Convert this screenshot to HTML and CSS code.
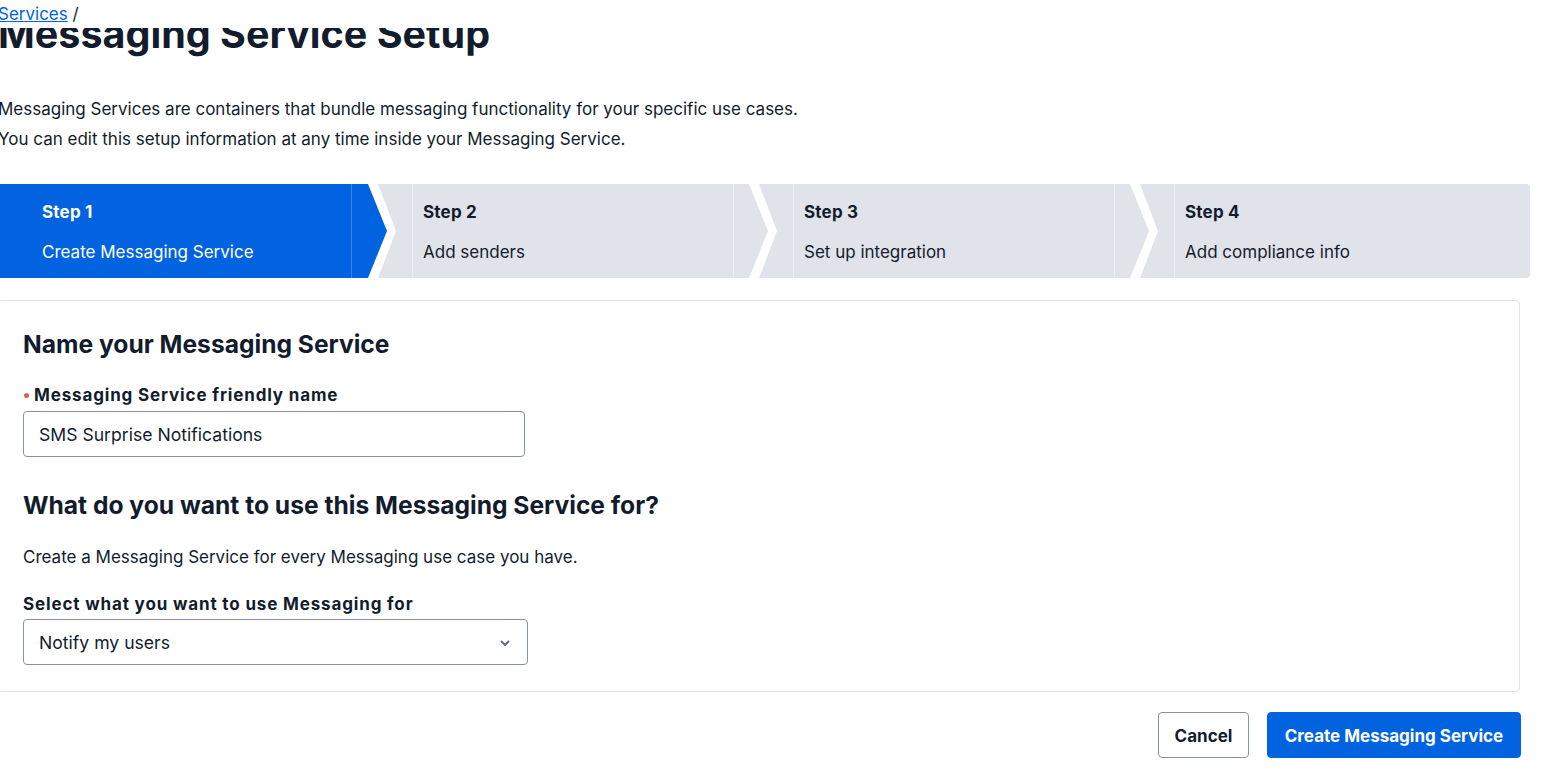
FILE: index.html
```html
<!DOCTYPE html>
<html lang="en">
<head>
<meta charset="utf-8">
<title>Messaging Service Setup</title>
<link rel="stylesheet" href="styles.css">
</head>
<body>
<div class="page">
  <nav class="crumbs"><a class="crumb-link" href="#">Services</a> /</nav>
  <div class="title-wrap"><h1 class="title">Messaging Service Setup</h1></div>
  <p class="intro">Messaging Services are containers that bundle messaging functionality for your specific use cases.<br>You can edit this setup information at any time inside your Messaging Service.</p>

  <ol class="steps">
    <li class="step step-first step-current">
      <div class="step-inner">
        <div class="step-num">Step 1</div>
        <div class="step-name">Create Messaging Service</div>
      </div>
    </li>
    <li class="step step-mid">
      <div class="step-inner">
        <div class="step-num">Step 2</div>
        <div class="step-name">Add senders</div>
      </div>
    </li>
    <li class="step step-mid">
      <div class="step-inner">
        <div class="step-num">Step 3</div>
        <div class="step-name">Set up integration</div>
      </div>
    </li>
    <li class="step step-last">
      <div class="step-inner">
        <div class="step-num">Step 4</div>
        <div class="step-name">Add compliance info</div>
      </div>
    </li>
  </ol>

  <section class="card">
    <h2 class="card-heading">Name your Messaging Service</h2>
    <label class="field-label field-label-required"><span class="req-dot"></span>Messaging Service friendly name</label>
    <div class="input">SMS Surprise Notifications</div>

    <h2 class="card-heading card-heading-second">What do you want to use this Messaging Service for?</h2>
    <p class="card-text">Create a Messaging Service for every Messaging use case you have.</p>
    <label class="field-label field-label-select">Select what you want to use Messaging for</label>
    <div class="select">
      <span class="select-value">Notify my users</span>
      <svg class="chevron" width="20" height="20" viewBox="0 0 20 20" aria-hidden="true"><path d="M6.5 8.5 L10 12 L13.5 8.5" fill="none" stroke="#606B85" stroke-width="1.8" stroke-linecap="round" stroke-linejoin="round"/></svg>
    </div>
  </section>

  <div class="actions">
    <button class="btn btn-secondary" type="button">Cancel</button>
    <button class="btn btn-primary" type="button">Create Messaging Service</button>
  </div>
</div>
</body>
</html>
```

FILE: styles.css
```css
html, body {
  margin: 0;
  padding: 0;
  background: #ffffff;
}

body {
  font-family: Inter, "Noto Sans", "Liberation Sans", sans-serif;
  font-size: 17px;
  color: #121C2D;
  overflow: hidden;
}

.page {
  width: 1532px;
  margin-left: -2px;
}

.crumbs {
  height: 28px;
  line-height: 28px;
  font-size: 17px;
  color: #121C2D;
}

.crumb-link {
  color: #0263E0;
  text-decoration: underline;
}

.title-wrap {
  height: 36px;
  overflow: hidden;
}

.title {
  margin: -18px 0 0 0;
  font-size: 39.5px;
  line-height: 48px;
  font-weight: 700;
  color: #121C2D;
}

.intro {
  margin: 30px 0 0 0;
  line-height: 30px;
  font-size: 17px;
}

.steps {
  list-style: none;
  margin: 30px 0 0 0;
  padding: 0;
  display: flex;
  height: 94px;
}

.step {
  height: 94px;
  background: #E1E3EA;
  color: #121C2D;
  margin-right: -9px;
  display: flex;
}

.step-first {
  width: 389px;
  flex: none;
  clip-path: polygon(0 0, calc(100% - 19px) 0, 100% 50%, calc(100% - 19px) 100%, 0 100%);
}

.step-mid {
  width: 390px;
  flex: none;
  clip-path: polygon(0 0, calc(100% - 19px) 0, 100% 50%, calc(100% - 19px) 100%, 0 100%, 18px 50%);
}

.step-last {
  width: 390px;
  flex: none;
  margin-right: 0;
  border-radius: 0 4px 4px 0;
  clip-path: polygon(0 0, 100% 0, 100% 100%, 0 100%, 18px 50%);
}

.step-current {
  background: #0263E0;
  color: #ffffff;
}

.step-inner {
  flex: 1;
  padding-top: 16px;
  box-sizing: border-box;
}

.step-first .step-inner {
  padding-left: 44px;
  margin-right: 35px;
  border-right: 1px solid rgba(255, 255, 255, 0.22);
}

.step-mid .step-inner {
  padding-left: 10px;
  margin-left: 34px;
  margin-right: 34px;
  border-left: 1px solid rgba(255, 255, 255, 0.35);
  border-right: 1px solid rgba(255, 255, 255, 0.35);
}

.step-last .step-inner {
  padding-left: 10px;
  margin-left: 34px;
  border-left: 1px solid rgba(255, 255, 255, 0.35);
}

.step-num {
  font-weight: 700;
  line-height: 24px;
  font-size: 17px;
  letter-spacing: 0.2px;
}

.step-name {
  margin-top: 16px;
  line-height: 24px;
  font-size: 17px;
}

.card {
  margin: 22px 10px 0 0;
  border: 1px solid #E1E3EA;
  border-radius: 4px;
  padding: 27px 24px 26px 24px;
}

.card-heading {
  margin: 0;
  font-size: 24.6px;
  line-height: 32px;
  font-weight: 700;
  color: #121C2D;
}

.card-heading-second {
  margin-top: 32px;
}

.field-label {
  display: flex;
  align-items: center;
  margin-top: 23px;
  font-weight: 700;
  font-size: 17px;
  line-height: 24px;
  letter-spacing: 0.85px;
}

.field-label-select {
  margin-top: 23px;
}

.req-dot {
  width: 5px;
  height: 5px;
  border-radius: 50%;
  background: #E55B5B;
  margin-left: 1px;
  margin-right: 5px;
}

.input {
  margin-top: 4px;
  width: 502px;
  height: 46px;
  box-sizing: border-box;
  border: 1px solid #8891AA;
  border-radius: 4px;
  padding: 1px 15px 0 15px;
  line-height: 44px;
  font-size: 17.6px;
  color: #121C2D;
  overflow: hidden;
}

.card-text {
  margin: 24px 0 0 0;
  font-size: 17px;
  line-height: 24px;
}

.select {
  margin-top: 3px;
  width: 505px;
  height: 46px;
  box-sizing: border-box;
  border: 1px solid #8891AA;
  border-radius: 4px;
  padding: 1px 12px 0 15px;
  display: flex;
  align-items: center;
  justify-content: space-between;
}

.select-value {
  font-size: 17.6px;
  line-height: 24px;
}

.chevron {
  display: block;
}

.actions {
  display: flex;
  justify-content: flex-end;
  gap: 18px;
  margin-top: 20px;
  padding-right: 9px;
}

.btn {
  height: 46px;
  box-sizing: border-box;
  border-radius: 4px;
  font-family: Inter, "Noto Sans", "Liberation Sans", sans-serif;
  font-size: 17px;
  font-weight: 700;
  padding: 1px 0 0 0;
  cursor: pointer;
}

.btn-secondary {
  background: #ffffff;
  border: 1px solid #8891AA;
  color: #121C2D;
  width: 91px;
}

.btn-primary {
  background: #0263E0;
  border: 1px solid #0263E0;
  color: #ffffff;
  width: 254px;
}
```
